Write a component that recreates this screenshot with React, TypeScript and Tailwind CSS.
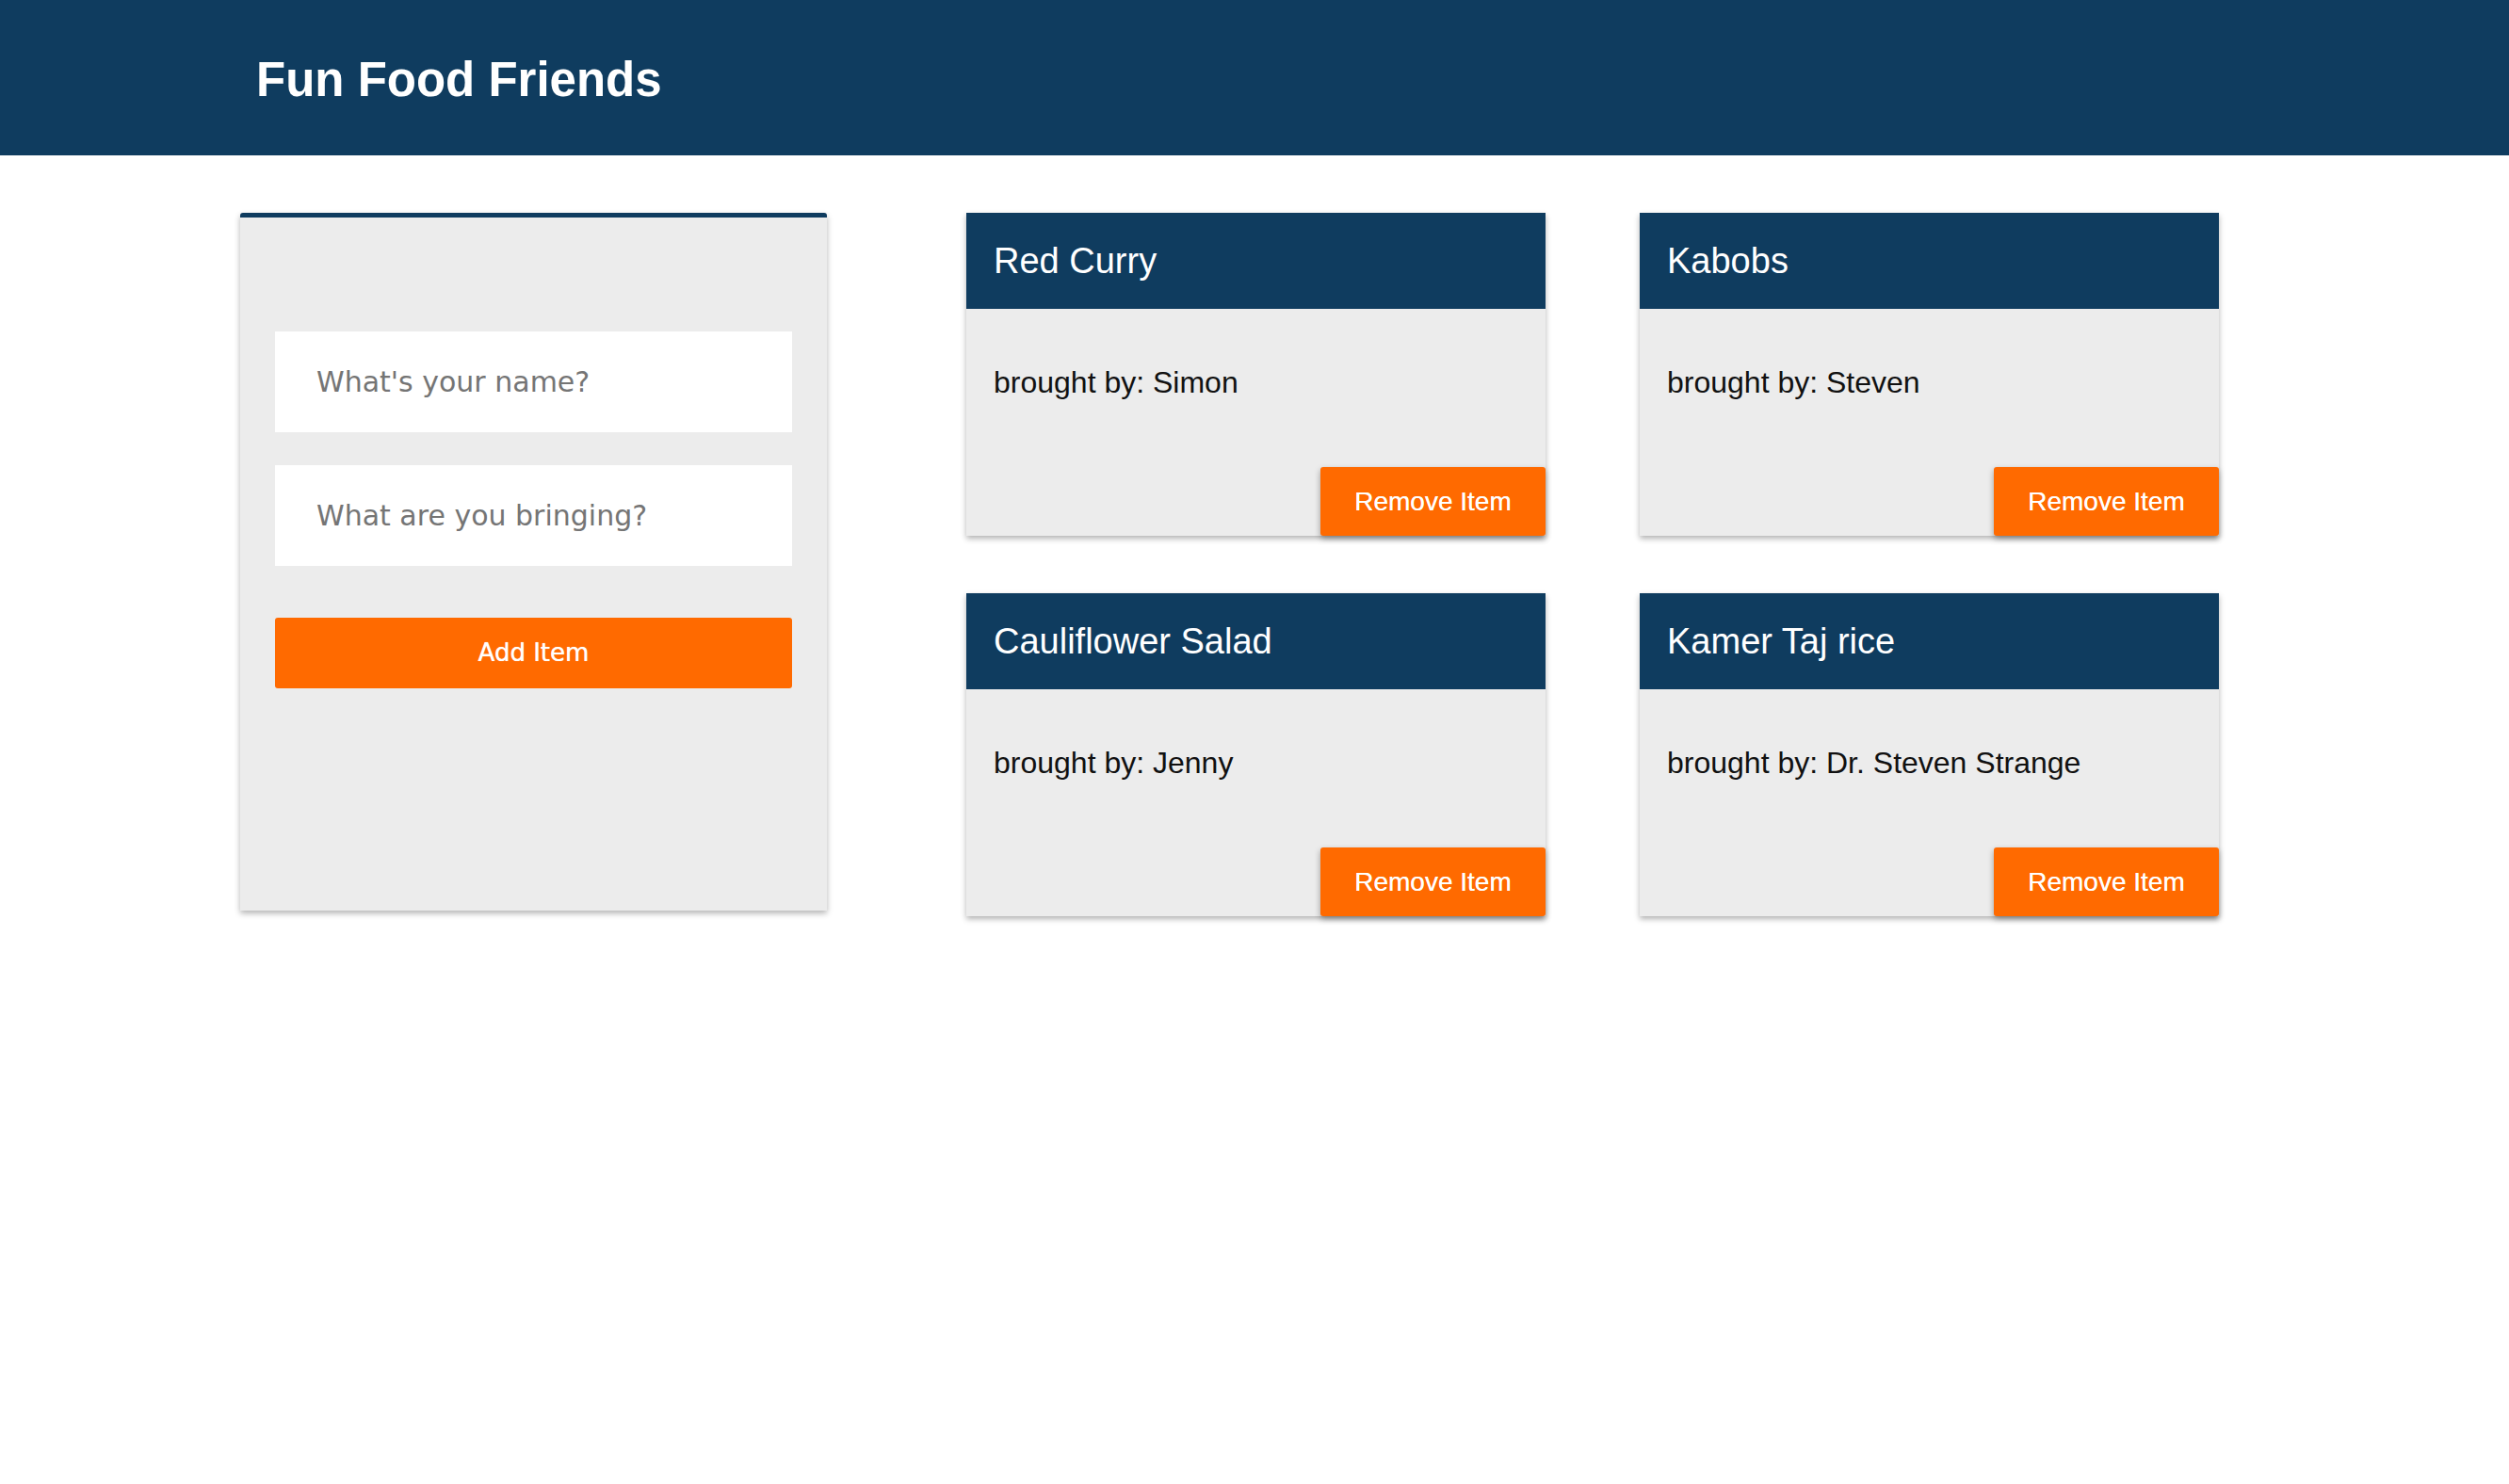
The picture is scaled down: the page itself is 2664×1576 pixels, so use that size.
const items = [
  { id: 1, title: 'Red Curry', user: 'Simon' },
  { id: 2, title: 'Kabobs', user: 'Steven' },
  { id: 3, title: 'Cauliflower Salad', user: 'Jenny' },
  { id: 4, title: 'Kamer Taj rice', user: 'Dr. Steven Strange' },
]

function ItemCard({ title, user }: { title: string; user: string }) {
  return (
    <div className="flex h-[343px] flex-col bg-[#ececec] shadow-[0_3px_6px_rgba(0,0,0,0.3)]">
      <div className="flex h-[102px] items-center bg-[#0f3c5f] px-[29px]">
        <h3 className="text-[38px] leading-none text-white">{title}</h3>
      </div>
      <p className="px-[29px] pt-[60px] text-[32px] leading-[37px] text-[#111]">brought by: {user}</p>
      <div className="mt-auto flex justify-end">
        <button className="h-[73px] w-[239px] rounded-[3px] bg-[#ff6a00] text-[28px] text-white shadow-[0_3px_6px_rgba(0,0,0,0.35)] [text-shadow:0_0_0.6px_white]">
          Remove Item
        </button>
      </div>
    </div>
  )
}

export default function App() {
  return (
    <div className="min-h-screen bg-white font-['Liberation_Sans',Arial,sans-serif]">
      {/* header */}
      <header className="flex h-[165px] items-center bg-[#0f3c5f] pl-[272px] pt-[6px]">
        <h1 className="text-[51px] font-bold text-white">Fun Food Friends</h1>
      </header>

      <div className="flex items-start pl-[255px] pt-[61px]">
        {/* add form */}
        <form className="h-[741px] w-[623px] rounded-t-[3px] border-t-[5px] border-[#0f3c5f] bg-[#ececec] px-[37px] pt-[121px] shadow-[0_3px_6px_rgba(0,0,0,0.3)]">
          <input
            className="block h-[107px] w-full bg-white px-[44px] font-['DejaVu_Sans',sans-serif] text-[30px] outline-none placeholder:text-[#757575]"
            placeholder="What's your name?"
          />
          <input
            className="mt-[35px] block h-[107px] w-full bg-white px-[44px] font-['DejaVu_Sans',sans-serif] text-[30px] outline-none placeholder:text-[#757575]"
            placeholder="What are you bringing?"
          />
          <button
            type="button"
            className="mt-[55px] block h-[75px] w-full rounded-[3px] bg-[#ff6a00] font-['DejaVu_Sans',sans-serif] text-[26px] text-white [text-shadow:0_0_0.8px_white]"
          >
            Add Item
          </button>
        </form>

        {/* items */}
        <div className="ml-[148px] grid grid-cols-[615px_615px] gap-x-[100px] gap-y-[61px]">
          {items.map((item) => (
            <ItemCard key={item.id} title={item.title} user={item.user} />
          ))}
        </div>
      </div>
    </div>
  )
}
